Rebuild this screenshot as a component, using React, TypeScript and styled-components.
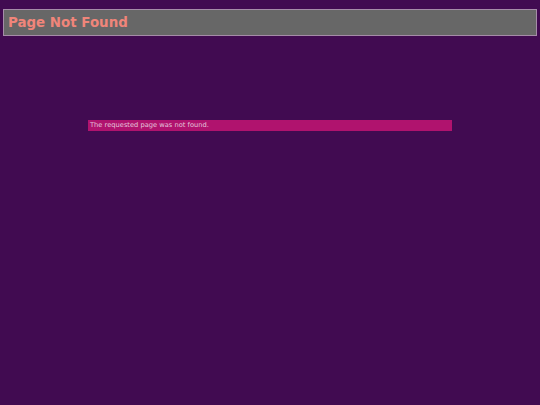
import React from "react";
import styled, { createGlobalStyle } from "styled-components";

const Global = createGlobalStyle`
  html, body {
    margin: 0;
    padding: 0;
    background: #410b51;
  }
  body {
    padding: 9px 3px;
    font-family: "DejaVu Sans", Verdana, sans-serif;
  }
`;

const Header = styled.header`
  background: #676767;
  border: 1px solid #a58ca8;
  height: 25px;
  display: flex;
  align-items: center;
  padding: 0 4px;
`;

const Title = styled.h1`
  margin: 0;
  font-size: 13.4px;
  font-weight: bold;
  color: #f0857a;
  line-height: 1;
  padding-top: 1px;
`;

const Notice = styled.div`
  width: 364px;
  margin: 84px auto 0;
  height: 11px;
  background: #b0136e;
  color: #e4c4dc;
  font-size: 6.7px;
  line-height: 11px;
  padding: 0 2px;
  box-sizing: border-box;
`;

export default function App() {
  return (
    <>
      <Global />
      <Header>
        <Title>Page Not Found</Title>
      </Header>
      <Notice>The requested page was not found.</Notice>
    </>
  );
}
